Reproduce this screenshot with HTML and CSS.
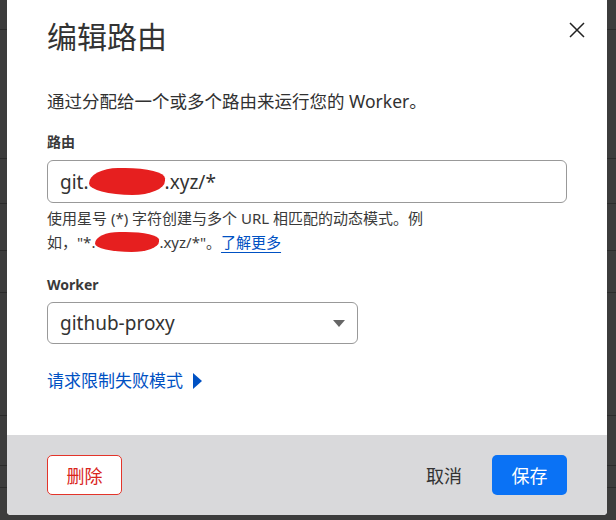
FILE: index.html
```html
<!DOCTYPE html>
<html lang="zh-CN">
<head>
  <meta charset="UTF-8" />
  <meta name="viewport" content="width=device-width, initial-scale=1.0"/>
  <title>编辑路由</title>
  <link rel="stylesheet" href="styles.css">
</head>
<body>
  <div class="page">
    <div class="row" style="height: 29px"></div>
    <div class="row" style="height: 128px"></div>
    <div class="row" style="height: 44px"></div>
    <div class="row" style="height: 46px"></div>
    <div class="row" style="height: 41px"></div>
    <div class="row" style="height: 122px"></div>
    <div class="row" style="height: 49px"></div>
    <div class="row" style="height: 21px"></div>
  </div>

  <div class="modal">
    <button class="close" aria-label="关闭">
      <svg width="16" height="16" viewBox="0 0 16 16">
        <path d="M1 1 L15 15 M15 1 L1 15" stroke="#222" stroke-width="1.5" fill="none"/>
      </svg>
    </button>

    <div class="modal-body">
      <h1>编辑路由</h1>
      <p class="desc">通过分配给一个或多个路由来运行您的 Worker。</p>

      <label class="field-label">路由</label>
      <div class="input">git.<span class="redact"></span>.xyz/*</div>
      <p class="help">使用星号 (*) 字符创建与多个 URL 相匹配的动态模式。例如，"*.<span class="redact small"></span>.xyz/*"。<a href="#" class="link">了解更多</a></p>

      <label class="field-label worker-label">Worker</label>
      <div class="select">
        <span>github-proxy</span>
        <svg width="12" height="7" viewBox="0 0 12 7"><path d="M0 0 H12 L6 7 Z" fill="#666"/></svg>
      </div>

      <a href="#" class="toggle">请求限制失败模式
        <svg width="9" height="16" viewBox="0 0 9 16"><path d="M0 0 L9 8 L0 16 Z" fill="#0051c3"/></svg>
      </a>
    </div>

    <div class="modal-footer">
      <button class="btn btn-danger">删除</button>
      <div class="actions">
        <button class="btn btn-plain">取消</button>
        <button class="btn btn-primary">保存</button>
      </div>
    </div>
  </div>
</body>
</html>
```

FILE: styles.css
```css
body {
  margin: 0;
  height: 520px;
  overflow: hidden;
  background-color: #3c3c3c;
  font-family: "Noto Sans", "Noto Sans CJK SC", sans-serif;
  color: #313131;
  position: relative;
}

.page .row {
  border-bottom: 1px solid #2b2b2b;
}

.modal {
  position: absolute;
  left: 7px;
  top: -4px;
  width: 600px;
  height: 519px;
  background-color: #fff;
  border-radius: 4px;
  overflow: hidden;
  display: flex;
  flex-direction: column;
}

.close {
  position: absolute;
  top: 26px;
  right: 22px;
  background: none;
  border: none;
  padding: 0;
  width: 16px;
  height: 16px;
  cursor: pointer;
}

.close svg {
  display: block;
}

.modal-body {
  flex: 1;
  padding: 23px 40px 0;
}

h1 {
  margin: 0;
  font-size: 30px;
  font-weight: 400;
  line-height: 36px;
  color: #333;
}

.desc {
  margin: 34px 0 0;
  font-size: 17.5px;
  line-height: 24px;
}

.field-label {
  display: block;
  margin-top: 19px;
  font-size: 14px;
  font-weight: 700;
  line-height: 20px;
  color: #3a3a3a;
}

.input {
  margin-top: 8px;
  height: 41px;
  border: 1px solid #999;
  border-radius: 6px;
  padding: 0 12px;
  display: flex;
  align-items: center;
  font-size: 19px;
  color: #333;
}

.redact {
  display: inline-block;
  width: 76px;
  height: 27px;
  background-color: #e61f1f;
  border-radius: 40% 55% 45% 60% / 60% 40% 55% 45%;
}

.redact.small {
  width: 64px;
  height: 20px;
  vertical-align: -4px;
}

.help {
  margin: 3px 0 0;
  max-width: 390px;
  font-size: 15px;
  line-height: 24px;
  color: #3a3a3a;
}

.link {
  color: #0051c3;
  text-decoration: underline;
  text-underline-offset: 4px;
}

.worker-label {
  margin-top: 21px;
}

.select {
  margin-top: 7px;
  width: 285px;
  height: 40px;
  border: 1px solid #999;
  border-radius: 6px;
  padding: 0 12px;
  display: flex;
  align-items: center;
  justify-content: space-between;
  font-size: 19px;
  color: #333;
}

.toggle {
  display: inline-flex;
  align-items: center;
  gap: 10px;
  margin-top: 25px;
  font-size: 17px;
  line-height: 24px;
  color: #0051c3;
  text-decoration: none;
}

.modal-footer {
  background-color: #d9d9db;
  padding: 20px 40px;
  display: flex;
  justify-content: space-between;
  align-items: center;
}

.actions {
  display: flex;
  align-items: center;
  gap: 14px;
}

.btn {
  font-family: inherit;
  font-size: 18px;
  height: 40px;
  border-radius: 5px;
  cursor: pointer;
  padding: 0;
}

.btn-danger {
  width: 75px;
  background-color: #fff;
  border: 1.5px solid #e3342a;
  color: #d9241b;
}

.btn-plain {
  padding: 0 16px;
  background: none;
  border: none;
  color: #333;
}

.btn-primary {
  width: 75px;
  background-color: #0a72f5;
  border: none;
  color: #fff;
}
```
